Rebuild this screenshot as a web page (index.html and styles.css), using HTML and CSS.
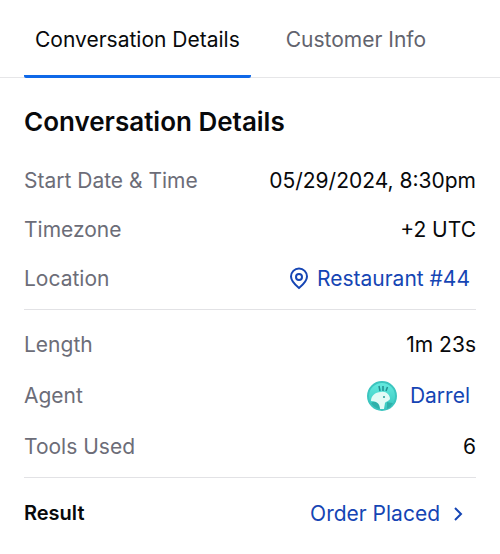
FILE: index.html
```html
<!DOCTYPE html>
<html lang="en">
<head>
  <meta charset="UTF-8">
  <meta name="viewport" content="width=device-width, initial-scale=1.0">
  <title>Conversation Details</title>
  <link rel="stylesheet" href="styles.css">
</head>
<body>
  <div class="tabs" role="tablist">
    <button type="button" class="tab active" role="tab" aria-selected="true">Conversation Details</button>
    <button type="button" class="tab" role="tab" aria-selected="false">Customer Info</button>
  </div>

  <main class="panel">
    <h1>Conversation Details</h1>

    <dl class="group">
      <div class="row">
        <dt>Start Date &amp; Time</dt>
        <dd>05/29/2024, 8:30pm</dd>
      </div>
      <div class="row">
        <dt>Timezone</dt>
        <dd>+2 UTC</dd>
      </div>
      <div class="row">
        <dt>Location</dt>
        <dd>
          <a href="#location">
            <svg class="pin" viewBox="0 0 20 24" aria-hidden="true">
              <path d="M10 21C7 18.500 2 14.500 2 9.500a8 8 0 0 1 16 0C18 14.500 13 18.500 10 21z"/>
              <circle cx="10" cy="10" r="3"/>
            </svg>
            Restaurant #44
          </a>
        </dd>
      </div>
    </dl>

    <dl class="group tall">
      <div class="row">
        <dt>Length</dt>
        <dd>1m 23s</dd>
      </div>
      <div class="row">
        <dt>Agent</dt>
        <dd>
          <a href="#agent" class="agent">
            <svg class="avatar" viewBox="0 0 30 30" aria-hidden="true">
              <defs>
                <linearGradient id="sky" x1="0" y1="0" x2="0" y2="1">
                  <stop offset="0" stop-color="#66ebe0"/>
                  <stop offset="1" stop-color="#35c5bd"/>
                </linearGradient>
              </defs>
              <circle cx="15" cy="15" r="14" fill="url(#sky)" stroke="#3cc5bf" stroke-width="2"/>
              <path d="M12 5l1 5M16 5v5M20.500 6l-1.500 4" fill="none" stroke="#218f90" stroke-width="1.500"/>
              <path d="M4 22q4-3 8 1l1 5Q7 27 4 22zM20 21q4 1 6 1-2 4-6 6z" fill="#2fb0aa"/>
              <path d="M4 20c0-5 4-9 10-9 5-1 9 3 9 7-2 3-4 2-5 4l-1 6h-4c0-4-2-8-9-8z" fill="#e3fbf6"/>
              <circle cx="17" cy="16" r="1" fill="#279e9b"/>
            </svg>
            Darrel
          </a>
        </dd>
      </div>
      <div class="row">
        <dt>Tools Used</dt>
        <dd>6</dd>
      </div>
    </dl>

    <dl class="group">
      <div class="row result">
        <dt>Result</dt>
        <dd>
          <a href="#order">
            Order Placed
            <svg class="chevron" viewBox="0 0 10 16" aria-hidden="true">
              <path d="M1 2l6 6-6 6"/>
            </svg>
          </a>
        </dd>
      </div>
    </dl>
  </main>
</body>
</html>
```

FILE: styles.css
```css
* {
  box-sizing: border-box;
}
body {
  margin: 0;
  background: #fff;
  color: #08090b;
  font-family: Inter, sans-serif;
  font-size: 21px;
  line-height: 24px;
}
.tabs {
  display: flex;
  gap: 24px;
  padding: 0 24px;
  border-bottom: 1px solid #e6e6e8;
}
.tab {
  margin-bottom: -1px;
  padding: 28px 11px 23px;
  border: none;
  border-bottom: 3px solid transparent;
  background: none;
  color: #62636d;
  font: inherit;
  cursor: pointer;
}
.tab.active {
  border-bottom-color: #0f68e8;
  border-radius: 2px;
  color: #08090b;
}
.panel {
  padding: 28px 24px;
}
h1 {
  margin: 0 0 31px;
  font-size: 26px;
  font-weight: 600;
  line-height: 32px;
}
.group {
  display: grid;
  gap: 25px;
  margin: 0;
}
.group + .group {
  margin-top: 18px;
  padding-top: 23px;
  border-top: 1px solid #e2e2e5;
}
.group.tall {
  gap: 27px;
}
.row {
  display: flex;
  justify-content: space-between;
  align-items: center;
  height: 24px;
}
dt {
  color: #6c6d78;
}
dd {
  margin: 0;
}
a {
  display: flex;
  align-items: center;
  gap: 8px;
  padding-right: 6px;
  color: #1545b4;
  text-decoration: none;
}
.agent {
  gap: 13px;
}
.result dt {
  color: #08090b;
  font-size: 20px;
  font-weight: 600;
}
.result a {
  gap: 14px;
  padding: 2px 12px 0 0;
}
.pin {
  width: 20px;
  height: 24px;
  fill: none;
  stroke: currentColor;
  stroke-width: 2;
}
.avatar {
  width: 30px;
  height: 30px;
}
.chevron {
  width: 10px;
  height: 16px;
  fill: none;
  stroke: currentColor;
  stroke-width: 2;
}
```
